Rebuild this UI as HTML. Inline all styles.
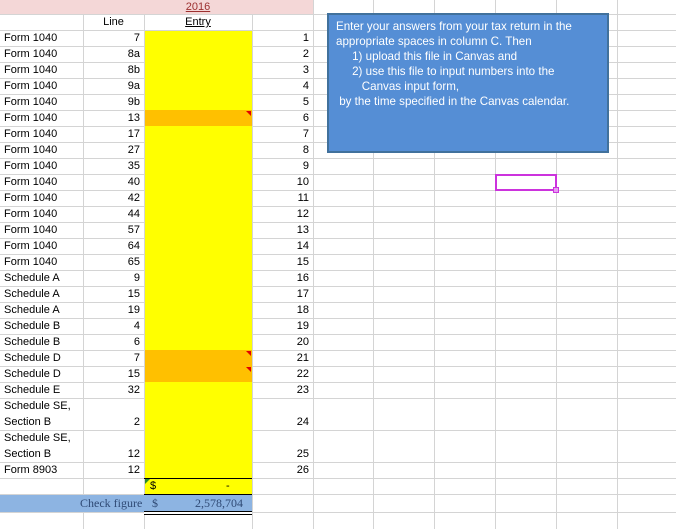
<!DOCTYPE html>
<html><head><style>
html,body{margin:0;width:676px;height:529px;overflow:hidden}
body{background:#fff;font-family:"Liberation Sans",sans-serif;font-size:11px;color:#000;position:relative}
.v{position:absolute;top:0;height:529px;width:1px;background:#d4d4d4;z-index:0}
.h{position:absolute;left:0;width:676px;height:1px;background:#d4d4d4;z-index:0}
.r{position:absolute;left:0;width:320px;height:16px;line-height:16px;z-index:3}
.r span{position:absolute}
.a{left:4px}
.b{text-align:right}
.d{left:252px;width:57px;text-align:right}
.bx{position:absolute;z-index:1}
</style></head><body>
<div class="bx" style="left:0;top:0;width:313px;height:14px;background:#f4d7d7"></div>
<div class="bx" style="left:145px;top:31px;width:107px;height:463px;background:#ffff00"></div>
<div class="bx" style="left:145px;top:110px;width:107px;height:16px;background:#ffc000"></div>
<div class="bx" style="left:145px;top:350px;width:107px;height:32px;background:#ffc000"></div>
<div class="bx" style="left:0;top:495px;width:252px;height:17px;background:#8db4e2"></div>

<div class="v" style="left:83px"></div><div class="v" style="left:144px"></div><div class="v" style="left:252px"></div><div class="v" style="left:313px"></div><div class="v" style="left:373px"></div><div class="v" style="left:434px"></div><div class="v" style="left:495px"></div><div class="v" style="left:556px"></div><div class="v" style="left:617px"></div>
<div class="h" style="top:14px"></div><div class="h" style="top:30px"></div><div class="h" style="top:46px"></div><div class="h" style="top:62px"></div><div class="h" style="top:78px"></div><div class="h" style="top:94px"></div><div class="h" style="top:110px"></div><div class="h" style="top:126px"></div><div class="h" style="top:142px"></div><div class="h" style="top:158px"></div><div class="h" style="top:174px"></div><div class="h" style="top:190px"></div><div class="h" style="top:206px"></div><div class="h" style="top:222px"></div><div class="h" style="top:238px"></div><div class="h" style="top:254px"></div><div class="h" style="top:270px"></div><div class="h" style="top:286px"></div><div class="h" style="top:302px"></div><div class="h" style="top:318px"></div><div class="h" style="top:334px"></div><div class="h" style="top:350px"></div><div class="h" style="top:366px"></div><div class="h" style="top:382px"></div><div class="h" style="top:398px"></div><div class="h" style="top:430px"></div><div class="h" style="top:462px"></div><div class="h" style="top:478px"></div><div class="h" style="top:494px"></div><div class="h" style="top:512px"></div>

<div class="bx" style="z-index:3;left:144px;top:0;width:108px;height:14px;line-height:14px;text-align:center;color:#9c3030;text-decoration:underline">2016</div>
<div class="r" style="top:14px"><span style="left:83px;width:61px;text-align:center">Line</span><span style="left:144px;width:108px;text-align:center;text-decoration:underline">Entry</span></div>

<div class="r" style="top:30px"><span class="a">Form 1040</span><span class="b" style="left:83px;width:57px">7</span><span class="d">1</span></div>
<div class="r" style="top:46px"><span class="a">Form 1040</span><span class="b" style="left:83px;width:57px">8a</span><span class="d">2</span></div>
<div class="r" style="top:62px"><span class="a">Form 1040</span><span class="b" style="left:83px;width:57px">8b</span><span class="d">3</span></div>
<div class="r" style="top:78px"><span class="a">Form 1040</span><span class="b" style="left:83px;width:57px">9a</span><span class="d">4</span></div>
<div class="r" style="top:94px"><span class="a">Form 1040</span><span class="b" style="left:83px;width:57px">9b</span><span class="d">5</span></div>
<div class="r" style="top:110px"><span class="a">Form 1040</span><span class="b" style="left:83px;width:57px">13</span><span class="d">6</span></div>
<div class="r" style="top:126px"><span class="a">Form 1040</span><span class="b" style="left:83px;width:57px">17</span><span class="d">7</span></div>
<div class="r" style="top:142px"><span class="a">Form 1040</span><span class="b" style="left:83px;width:57px">27</span><span class="d">8</span></div>
<div class="r" style="top:158px"><span class="a">Form 1040</span><span class="b" style="left:83px;width:57px">35</span><span class="d">9</span></div>
<div class="r" style="top:174px"><span class="a">Form 1040</span><span class="b" style="left:83px;width:57px">40</span><span class="d">10</span></div>
<div class="r" style="top:190px"><span class="a">Form 1040</span><span class="b" style="left:83px;width:57px">42</span><span class="d">11</span></div>
<div class="r" style="top:206px"><span class="a">Form 1040</span><span class="b" style="left:83px;width:57px">44</span><span class="d">12</span></div>
<div class="r" style="top:222px"><span class="a">Form 1040</span><span class="b" style="left:83px;width:57px">57</span><span class="d">13</span></div>
<div class="r" style="top:238px"><span class="a">Form 1040</span><span class="b" style="left:83px;width:57px">64</span><span class="d">14</span></div>
<div class="r" style="top:254px"><span class="a">Form 1040</span><span class="b" style="left:83px;width:57px">65</span><span class="d">15</span></div>
<div class="r" style="top:270px"><span class="a">Schedule A</span><span class="b" style="left:83px;width:57px">9</span><span class="d">16</span></div>
<div class="r" style="top:286px"><span class="a">Schedule A</span><span class="b" style="left:83px;width:57px">15</span><span class="d">17</span></div>
<div class="r" style="top:302px"><span class="a">Schedule A</span><span class="b" style="left:83px;width:57px">19</span><span class="d">18</span></div>
<div class="r" style="top:318px"><span class="a">Schedule B</span><span class="b" style="left:83px;width:57px">4</span><span class="d">19</span></div>
<div class="r" style="top:334px"><span class="a">Schedule B</span><span class="b" style="left:83px;width:57px">6</span><span class="d">20</span></div>
<div class="r" style="top:350px"><span class="a">Schedule D</span><span class="b" style="left:83px;width:57px">7</span><span class="d">21</span></div>
<div class="r" style="top:366px"><span class="a">Schedule D</span><span class="b" style="left:83px;width:57px">15</span><span class="d">22</span></div>
<div class="r" style="top:382px"><span class="a">Schedule E</span><span class="b" style="left:83px;width:57px">32</span><span class="d">23</span></div>
<div class="r" style="top:398px"><span class="a">Schedule SE,</span></div>
<div class="r" style="top:414px"><span class="a">Section B</span><span class="b" style="left:83px;width:57px">2</span><span class="d">24</span></div>
<div class="r" style="top:430px"><span class="a">Schedule SE,</span></div>
<div class="r" style="top:446px"><span class="a">Section B</span><span class="b" style="left:83px;width:57px">12</span><span class="d">25</span></div>
<div class="r" style="top:462px"><span class="a">Form 8903</span><span class="b" style="left:83px;width:57px">12</span><span class="d">26</span></div>

<div class="bx" style="z-index:2;left:246px;top:111px;width:0;height:0;border-left:5px solid transparent;border-top:5px solid #e00000"></div>
<div class="bx" style="z-index:2;left:246px;top:351px;width:0;height:0;border-left:5px solid transparent;border-top:5px solid #e00000"></div>
<div class="bx" style="z-index:2;left:246px;top:367px;width:0;height:0;border-left:5px solid transparent;border-top:5px solid #e00000"></div>
<div class="bx" style="z-index:2;left:145px;top:479px;width:0;height:0;border-right:5px solid transparent;border-top:5px solid #2a8a2a"></div>

<div class="bx" style="z-index:2;left:144px;top:478px;width:108px;height:1px;background:#000"></div>
<div class="r" style="top:478px"><span style="left:150px">$</span><span style="left:226px">-</span></div>
<div class="bx" style="z-index:2;left:144px;top:494px;width:108px;height:1px;background:#000"></div>
<div class="bx" style="z-index:2;left:144px;top:511px;width:108px;height:4px;border-top:1px solid #000;border-bottom:1px solid #000;box-sizing:border-box;background:#fff"></div>
<div class="r" style="top:495px;height:17px;line-height:17px;color:#2f4a75;font-family:'Liberation Serif',serif;font-size:12px"><span style="left:80px">Check figure</span><span style="left:152px">$</span><span style="left:190px;width:53px;text-align:right">2,578,704</span></div>

<div class="bx" style="z-index:4;left:327px;top:13px;width:278px;height:136px;background:#558ed5;border:2px solid #41719c;color:#fff;font-size:11.6px;line-height:15px;">
<div style="position:absolute;left:7px;top:4px;white-space:pre;">Enter your answers from your tax return in the
appropriate spaces in column C. Then
     1) upload this file in Canvas and
     2) use this file to input numbers into the
        Canvas input form,
 by the time specified in the Canvas calendar.</div></div>

<div class="bx" style="z-index:4;left:495px;top:174px;width:58px;height:13px;border:2px solid #cc33dd"></div>
<div class="bx" style="z-index:5;left:553px;top:187px;width:4px;height:4px;background:#e59cf0;border:1px solid #cc33dd"></div>
</body></html>
